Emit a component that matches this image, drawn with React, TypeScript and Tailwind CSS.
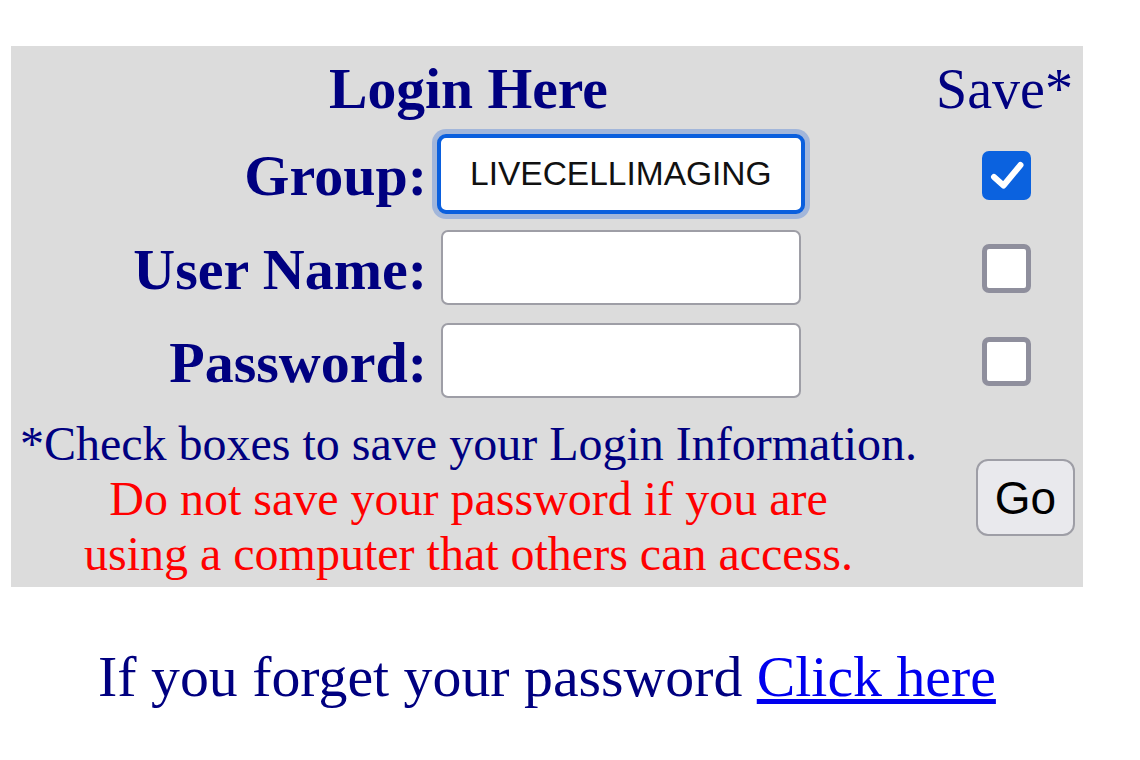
import React from "react";

const serif = "font-['Liberation_Serif','Times_New_Roman',serif]";

function CheckBox({ checked }: { checked?: boolean }) {
  if (checked) {
    return (
      <div className="w-[49px] h-[49px] rounded-[7px] bg-[#0b62df] flex items-center justify-center">
        <svg width="49" height="49" viewBox="0 0 49 49">
          <path d="M12 26 L21.5 34.5 L38.5 14" fill="none" stroke="#ffffff" strokeWidth="6" strokeLinecap="round" strokeLinejoin="round" />
        </svg>
      </div>
    );
  }
  return <div className="w-[49px] h-[49px] rounded-[7px] bg-white border-[5px] border-[#8f8f9d]" />;
}

export default function App() {
  const label = `${serif} font-bold text-[58px] leading-[66px] text-[#000080] text-right pr-[14px] pt-[5px]`;
  return (
    <div className={`w-[1140px] h-[760px] bg-white ${serif}`}>
      <div className="pt-[46px] pl-[11px]">
        <div className="w-[1072px] bg-[#dcdcdc] grid grid-cols-[430px_360px_125px_157px] pb-[6px]">
          {/* title row */}
          <div className="col-span-3 h-[81px] pt-[10px] text-center">
            <span className="font-bold text-[57.6px] leading-[66px] text-[#000080]">Login Here</span>
          </div>
          <div className="h-[81px] pt-[10px] flex justify-center">
            <span className="text-[56px] leading-[66px] text-[#000080]">Save*</span>
          </div>

          {/* Group */}
          <div className="h-[93px] flex items-center justify-end">
            <span className={label}>Group:</span>
          </div>
          <div className="h-[93px] flex items-center justify-center">
            <div className="shrink-0 w-[368px] h-[80px] rounded-[9px] border-[4px] border-[#0a5fde] shadow-[0_0_0_5px_#a2b6da] bg-white flex items-center pl-[29px] pt-[2px] font-['Liberation_Sans',Arial,sans-serif] text-[33.5px] text-[#111111]">
              LIVECELLIMAGING
            </div>
          </div>
          <div className="h-[93px]" />
          <div className="h-[93px] flex items-center justify-center pl-[4px] pt-[4px]">
            <CheckBox checked />
          </div>

          {/* User Name */}
          <div className="h-[94px] flex items-center justify-end">
            <span className={label}>User Name:</span>
          </div>
          <div className="h-[94px] flex items-center">
            <div className="w-[360px] h-[75px] rounded-[7px] border-[2.5px] border-[#9e9ea6] bg-white" />
          </div>
          <div className="h-[94px]" />
          <div className="h-[94px] flex items-center justify-center pl-[4px] pt-[2px]">
            <CheckBox />
          </div>

          {/* Password */}
          <div className="h-[93px] flex items-center justify-end">
            <span className={label}>Password:</span>
          </div>
          <div className="h-[93px] flex items-center">
            <div className="w-[360px] h-[75px] rounded-[7px] border-[2.5px] border-[#9e9ea6] bg-white" />
          </div>
          <div className="h-[93px]" />
          <div className="h-[93px] flex items-center justify-center pl-[4px] pt-[2px]">
            <CheckBox />
          </div>

          {/* note */}
          <div className="col-span-3 pt-[9px] text-center text-[48px] leading-[55px]">
            <div className="text-[#000080]">*Check boxes to save your Login Information.</div>
            <div className="text-[#ff0000]">
              Do not save your password if you are
              <br />
              using a computer that others can access.
            </div>
          </div>
          <div className="flex items-center justify-end pr-[8px] pt-[6px]">
            <button className="w-[99px] h-[77px] rounded-[12px] border-[2.5px] border-[#9e9ea6] bg-[#e9e9ed] font-['Liberation_Sans',Arial,sans-serif] text-[46px] text-black flex items-center justify-center pt-[2px]">
              Go
            </button>
          </div>
        </div>
      </div>
      <div className="w-[1094px] mt-[57px] text-center text-[57.8px] leading-[66px] text-[#000080]">
        If you forget your password <a href="#" className="text-[#0000ee] underline">Click here</a>
      </div>
    </div>
  );
}
